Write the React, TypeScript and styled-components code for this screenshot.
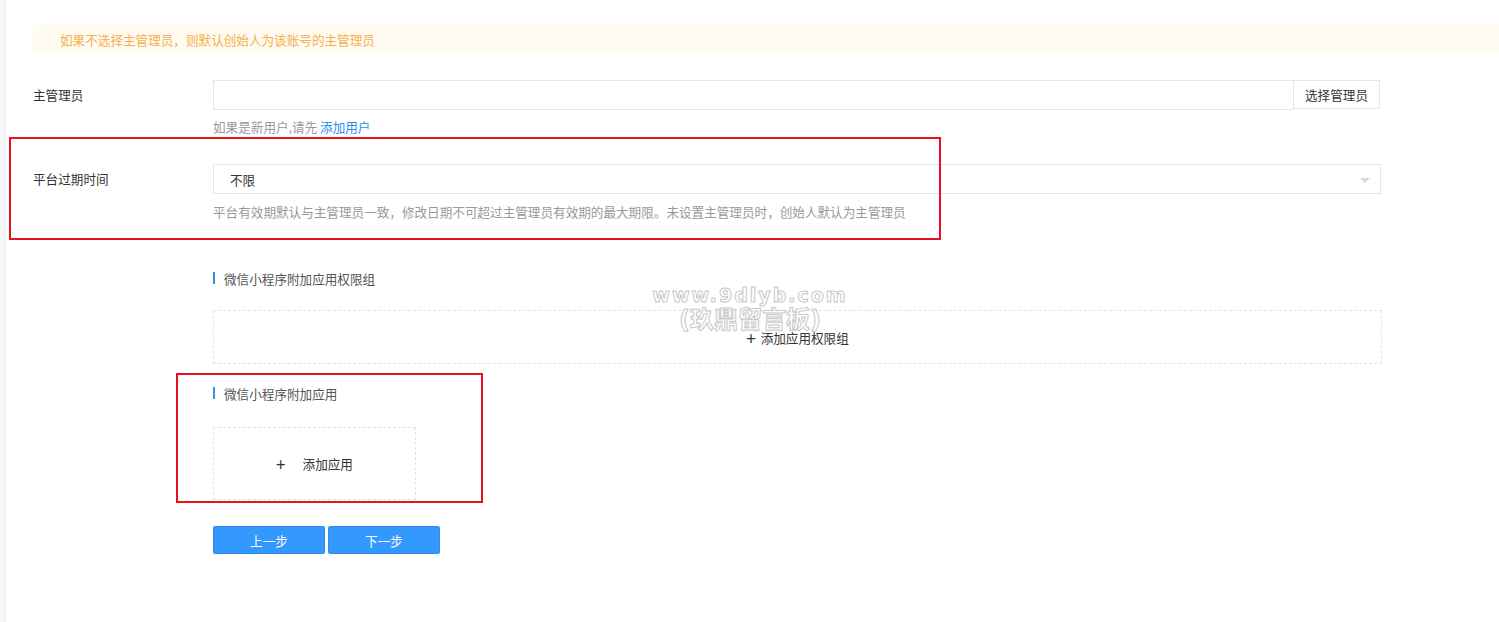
import { FC } from 'react';
import styled, { createGlobalStyle } from 'styled-components';

const GlobalStyle = createGlobalStyle`
  html, body {
    margin: 0;
    padding: 0;
    background: #ffffff;
    font-family: "Noto Sans CJK SC", "Noto Sans", sans-serif;
    font-size: 12.6px;
    color: #333;
  }
  * { box-sizing: border-box; }
`;

const Page = styled.div`
  position: relative;
  display: flex;
  min-height: 622px;
  overflow: hidden;
`;

const SideStrip = styled.div`
  width: 6px;
  flex: none;
  background: #f5f7fa;
  border-right: 1px solid #e8ebf0;
`;

const Content = styled.div`
  flex: 1;
  padding: 25px 0 0 27px;
  display: flex;
  flex-direction: column;
`;

const Alert = styled.div`
  height: 28px;
  display: flex;
  align-items: center;
  padding-left: 27px;
  background: #fffaf2;
  color: #f5b04a;
`;

const FormRow = styled.div<{ $top: number }>`
  display: flex;
  margin-top: ${({ $top }) => $top}px;
`;

const Label = styled.div`
  width: 180px;
  flex: none;
  height: 30px;
  line-height: 30px;
  color: #333;
`;

const Field = styled.div<{ $width: number }>`
  width: ${({ $width }) => $width}px;
  display: flex;
  flex-direction: column;
`;

const InputGroup = styled.div`
  display: flex;
  height: 30px;
`;

const TextInput = styled.input`
  flex: 1;
  height: 30px;
  border: 1px solid #e6e6e6;
  outline: none;
  padding: 0 10px;
  font: inherit;
`;

const AddonButton = styled.button`
  width: 86px;
  height: 29px;
  border: 1px solid #e6e6e6;
  border-left: none;
  background: #fff;
  color: #333;
  font: inherit;
  padding: 0;
  cursor: pointer;
`;

const SelectBox = styled.div`
  position: relative;
  height: 30px;
  border: 1px solid #e6e6e6;
  display: flex;
  align-items: center;
  padding-left: 16px;
  color: #333;
`;

const Caret = styled.span`
  position: absolute;
  right: 10px;
  top: 13px;
  width: 0;
  height: 0;
  border-left: 5px solid transparent;
  border-right: 5px solid transparent;
  border-top: 5px solid #d9d9dd;
`;

const Help = styled.div<{ $top: number }>`
  margin-top: ${({ $top }) => $top}px;
  height: 20px;
  line-height: 20px;
  color: #999;
`;

const Link = styled.a`
  color: #2d8cf0;
  text-decoration: none;
  cursor: pointer;
`;

const Section = styled.div<{ $top: number }>`
  margin-left: 180px;
  margin-top: ${({ $top }) => $top}px;
  display: flex;
  flex-direction: column;
`;

const SectionTitle = styled.div`
  display: flex;
  align-items: center;
  gap: 9px;
  height: 20px;
  color: #555;
  &::before {
    content: '';
    width: 2px;
    height: 12px;
    background: #3a8ee6;
  }
`;

const DashedBox = styled.div<{ $width: number; $height: number; $top: number; $gap: number }>`
  margin-top: ${({ $top }) => $top}px;
  width: ${({ $width }) => $width}px;
  height: ${({ $height }) => $height}px;
  border: 1px dashed #e3e3e3;
  display: flex;
  align-items: center;
  justify-content: center;
  gap: ${({ $gap }) => $gap}px;
  color: #333;
  cursor: pointer;
`;

const Plus = styled.span`
  font-size: 17px;
  line-height: 1;
  color: #333;
`;

const ButtonRow = styled.div`
  margin-top: 26px;
  margin-left: 180px;
  display: flex;
  gap: 3px;
`;

const PrimaryButton = styled.button`
  width: 112px;
  height: 28px;
  border: 1px solid #2b88f0;
  border-radius: 2px;
  background: #3399ff;
  color: #fff;
  font: inherit;
  cursor: pointer;
`;

const Annotation = styled.div<{ $x: number; $y: number; $w: number; $h: number }>`
  position: absolute;
  left: ${({ $x }) => $x}px;
  top: ${({ $y }) => $y}px;
  width: ${({ $w }) => $w}px;
  height: ${({ $h }) => $h}px;
  border: 2px solid #e8101e;
  pointer-events: none;
`;

const Watermark = styled.div`
  position: absolute;
  left: 650px;
  top: 285px;
  width: 200px;
  display: flex;
  flex-direction: column;
  align-items: center;
  pointer-events: none;
  font-family: "DejaVu Sans", "Noto Sans CJK SC", sans-serif;
  font-weight: bold;
  color: rgba(255, 255, 255, 0.85);
  -webkit-text-stroke: 1px #c8c8c8;
`;

const WatermarkLine = styled.span<{ $size: number; $spacing: number }>`
  font-size: ${({ $size }) => $size}px;
  letter-spacing: ${({ $spacing }) => $spacing}px;
  line-height: 1.15;
`;

const App: FC = () => {
  return (
    <>
      <GlobalStyle />
      <Page>
        <SideStrip />
        <Content>
          <Alert>如果不选择主管理员，则默认创始人为该账号的主管理员</Alert>

          <FormRow $top={27}>
            <Label>主管理员</Label>
            <Field $width={1167}>
              <InputGroup>
                <TextInput />
                <AddonButton>选择管理员</AddonButton>
              </InputGroup>
              <Help $top={7}>
                如果是新用户,请先 <Link>添加用户</Link>
              </Help>
            </Field>
          </FormRow>

          <FormRow $top={27}>
            <Label>平台过期时间</Label>
            <Field $width={1168}>
              <SelectBox>
                不限
                <Caret />
              </SelectBox>
              <Help $top={8}>
                平台有效期默认与主管理员一致，修改日期不可超过主管理员有效期的最大期限。未设置主管理员时，创始人默认为主管理员
              </Help>
            </Field>
          </FormRow>

          <Section $top={46}>
            <SectionTitle>微信小程序附加应用权限组</SectionTitle>
            <DashedBox $width={1169} $height={54} $top={22} $gap={5}>
              <Plus>+</Plus>
              <span>添加应用权限组</span>
            </DashedBox>
          </Section>

          <Section $top={19}>
            <SectionTitle>微信小程序附加应用</SectionTitle>
            <DashedBox $width={203} $height={73} $top={24} $gap={17}>
              <Plus>+</Plus>
              <span>添加应用</span>
            </DashedBox>
          </Section>

          <ButtonRow>
            <PrimaryButton>上一步</PrimaryButton>
            <PrimaryButton>下一步</PrimaryButton>
          </ButtonRow>
        </Content>

        <Annotation $x={9} $y={137} $w={932} $h={103} />
        <Annotation $x={176} $y={373} $w={307} $h={130} />

        <Watermark>
          <WatermarkLine $size={19} $spacing={2}>www.9dlyb.com</WatermarkLine>
          <WatermarkLine $size={24} $spacing={0}>(玖鼎留言板)</WatermarkLine>
        </Watermark>
      </Page>
    </>
  );
};

export default App;
